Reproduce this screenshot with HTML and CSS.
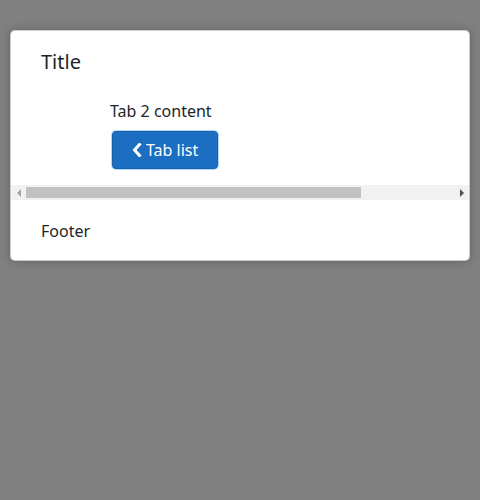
FILE: index.html
```html
<!DOCTYPE html>
<html>
<head>
<meta charset="utf-8">
<link rel="stylesheet" href="styles.css">
</head>
<body>
<div class="dialog">
  <div class="dialog-header"><h5 class="title">Title</h5></div>
  <div class="dialog-body">
    <div class="viewport">
      <div class="tab-panel">
        <p class="tab-text">Tab 2 content</p>
        <button class="btn"><svg class="chev" width="10" height="14" viewBox="0 0 10 14"><path d="M7.5 1.5 L2.5 7 L7.5 12.5" fill="none" stroke="#fff" stroke-width="3" stroke-linecap="square" stroke-linejoin="miter"/></svg>Tab list</button>
      </div>
    </div>
    <div class="hscroll">
      <div class="arrow"><span class="tri tri-left"></span></div>
      <div class="track"><div class="thumb"></div></div>
      <div class="arrow"><span class="tri tri-right"></span></div>
    </div>
  </div>
  <div class="dialog-footer">Footer</div>
</div>
</body>
</html>
```
FILE: styles.css
```css
html, body { margin: 0; padding: 0; }
body {
  background: #808080;
  font-family: "Noto Sans", "Open Sans", sans-serif;
  color: #212529;
  padding: 30px 10px;
  height: 500px;
  box-sizing: border-box;
}
.dialog {
  width: 460px;
  background: #fff;
  border: 1px solid rgba(0,0,0,0.2);
  border-radius: 5px;
  box-shadow: 0 0 10px rgba(0,0,0,0.25);
  box-sizing: border-box;
  overflow: hidden;
}
.dialog-header { padding: 16px 30px 0; }
.title { margin: 0; font-size: 20px; font-weight: 400; line-height: 30px; }
.viewport { overflow: hidden; }
.tab-panel {
  width: 585px;
  box-sizing: border-box;
  padding: 22px 0 16px 99px;
}
.tab-text { margin: 0 0 8px; font-size: 16px; line-height: 24px; }
.btn {
  display: inline-flex;
  align-items: center;
  gap: 4px;
  font-family: inherit;
  font-size: 16px;
  line-height: 24px;
  padding: 6px 19px 6px 19px;
  color: #fff;
  background: #1b6ec2;
  border: 1px solid #1861ac;
  border-radius: 4px;
  box-shadow: 0 0 0 1px #b3d7f5;
  margin-left: 2px;
}
.chev { display: block; }
.hscroll {
  display: flex;
  height: 15px;
  background: #f1f1f1;
}
.arrow {
  width: 15px;
  flex: none;
  display: flex;
  align-items: center;
  justify-content: center;
}
.tri { width: 0; height: 0; border-top: 4px solid transparent; border-bottom: 4px solid transparent; }
.tri-left { border-right: 4px solid #a3a3a3; }
.tri-right { border-left: 4px solid #505050; }
.track { flex: 1; display: flex; align-items: center; }
.thumb { width: 335px; height: 11px; background: #c1c1c1; }
.dialog-footer { padding: 19px 30px 17px; font-size: 16px; line-height: 24px; }
```
